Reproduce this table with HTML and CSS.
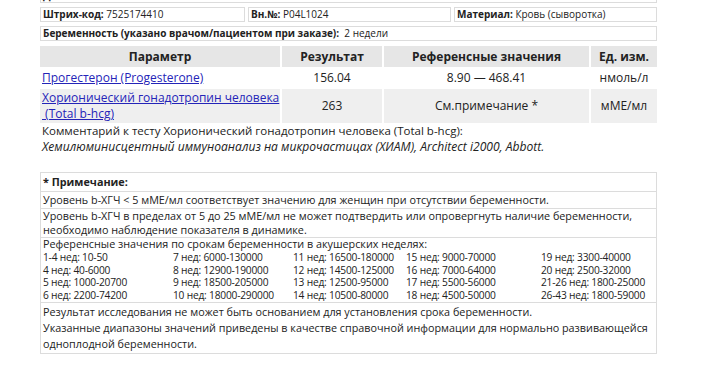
FILE: index.html
```html
<!DOCTYPE html>
<html lang="ru">
<head>
  <meta charset="UTF-8" />
  <title>Результаты анализов</title>
  <link rel="stylesheet" href="styles.css">
</head>
<body>
  <div class="page">
    <div class="info-row">
      <div class="info-cell full"><b>Дата:</b> 12.04.2025</div>
    </div>
    <div class="info-row">
      <div class="info-cell code"><b>Штрих-код:</b> 7525174410</div>
      <div class="info-cell num"><b>Вн.№:</b> P04L1024</div>
      <div class="info-cell material"><b>Материал:</b> Кровь (сыворотка)</div>
    </div>
    <div class="info-row">
      <div class="info-cell full"><b>Беременность (указано врачом/пациентом при заказе):</b>&nbsp; 2 недели</div>
    </div>

    <table class="results">
      <colgroup>
        <col class="col-param">
        <col class="col-result">
        <col class="col-ref">
        <col class="col-unit">
      </colgroup>
      <thead>
        <tr>
          <th>Параметр</th>
          <th>Результат</th>
          <th>Референсные значения</th>
          <th>Ед. изм.</th>
        </tr>
      </thead>
      <tbody>
        <tr>
          <td class="param"><a href="#">Прогестерон (Progesterone)</a></td>
          <td>156.04</td>
          <td>8.90 — 468.41</td>
          <td>нмоль/л</td>
        </tr>
        <tr class="alt">
          <td class="param"><a href="#">Хорионический гонадотропин человека<br>&nbsp;(Total b-hcg)</a></td>
          <td>263</td>
          <td>См.примечание *</td>
          <td>мМЕ/мл</td>
        </tr>
      </tbody>
    </table>

    <div class="comment">
      <p>Комментарий к тесту Хорионический гонадотропин человека (Total b-hcg):</p>
      <p class="method">Хемилюминисцентный иммуноанализ на микрочастицах (ХИАМ), Architect i2000, Abbott.</p>
    </div>

    <div class="note">
      <div class="note-row note-title">* Примечание:</div>
      <div class="note-row">Уровень b-ХГЧ &lt; 5 мМЕ/мл соответствует значению для женщин при отсутствии беременности.</div>
      <div class="note-row pair">Уровень b-ХГЧ в пределах от 5 до 25 мМЕ/мл не может подтвердить или опровергнуть наличие беременности,<br>необходимо наблюдение показателя в динамике.</div>
      <div class="note-row weeks">
        <div class="weeks-title">Референсные значения по срокам беременности в акушерских неделях:</div>
        <div class="weeks-grid">
          <span>1-4 нед: 10-50</span><span>7 нед: 6000-130000</span><span>11 нед: 16500-180000</span><span>15 нед: 9000-70000</span><span>19 нед: 3300-40000</span>
          <span>4 нед: 40-6000</span><span>8 нед: 12900-190000</span><span>12 нед: 14500-125000</span><span>16 нед: 7000-64000</span><span>20 нед: 2500-32000</span>
          <span>5 нед: 1000-20700</span><span>9 нед: 18500-205000</span><span>13 нед: 12500-95000</span><span>17 нед: 5500-56000</span><span>21-26 нед: 1800-25000</span>
          <span>6 нед: 2200-74200</span><span>10 нед: 18000-290000</span><span>14 нед: 10500-80000</span><span>18 нед: 4500-50000</span><span>26-43 нед: 1800-59000</span>
        </div>
      </div>
      <div class="note-row last">Результат исследования не может быть основанием для установления срока беременности.<br>Указанные диапазоны значений приведены в качестве справочной информации для нормально развивающейся<br>одноплодной беременности.</div>
    </div>
  </div>
</body>
</html>
```

FILE: styles.css
```css
* {
  margin: 0;
  padding: 0;
  box-sizing: border-box;
}

body {
  background: #fff;
  color: #222;
  font-family: 'Open Sans', 'DejaVu Sans', sans-serif;
  font-size: 12px;
}

.page {
  width: 617px;
  margin: -12px 0 0 40px;
}

/* info boxes */
.info-row {
  display: flex;
  gap: 3px;
  margin-bottom: 4px;
}

.info-cell {
  height: 15px;
  border: 1px solid #dcdcdc;
  padding: 0 2px;
  font-size: 10px;
  line-height: 13px;
  white-space: nowrap;
}

.info-cell.full { flex: 1; }
.info-cell.code { width: 205px; }
.info-cell.num { width: 203px; }
.info-cell.material { flex: 1; }

/* results table */
.results {
  width: 621px;
  margin: -1px -2px -2px;
  border-collapse: separate;
  border-spacing: 2px;
  table-layout: fixed;
}

.col-param { width: 240px; }
.col-result { width: 100px; }
.col-ref { width: 205px; }

.results th {
  background: #e6e6e6;
  height: 21px;
  font-size: 12px;
  font-weight: 700;
  text-align: center;
}

.results td {
  height: 18px;
  padding: 0 2px;
  line-height: 16px;
  text-align: center;
}

.results td.param {
  text-align: left;
  white-space: nowrap;
}

.results tr.alt td {
  background: #efefef;
  height: 34px;
}

.results a {
  color: #2424b8;
  text-decoration: underline;
}

/* comment */
.comment {
  padding: 0 2px;
  font-size: 11.5px;
  line-height: 16px;
}

.comment .method {
  font-size: 12.1px;
  font-style: italic;
}

/* note */
.note {
  margin-top: 17px;
  border: 1px solid #dcdcdc;
  font-size: 10.8px;
}

.note-row {
  padding: 1px 2px;
  line-height: 14px;
  border-top: 1px solid #dcdcdc;
}

.note-row:first-child { border-top: none; }

.note-title {
  font-weight: 700;
  padding: 2px;
}

.note-row.pair { padding: 0 2px; }

.note-row.weeks {
  padding: 0 2px;
  line-height: 12.8px;
}

.weeks-grid {
  display: grid;
  grid-template-columns: 130px 120px 113px 135px 1fr;
  font-size: 10.2px;
  letter-spacing: -0.2px;
  white-space: nowrap;
}

.note-row.last {
  line-height: 16px;
}
```
